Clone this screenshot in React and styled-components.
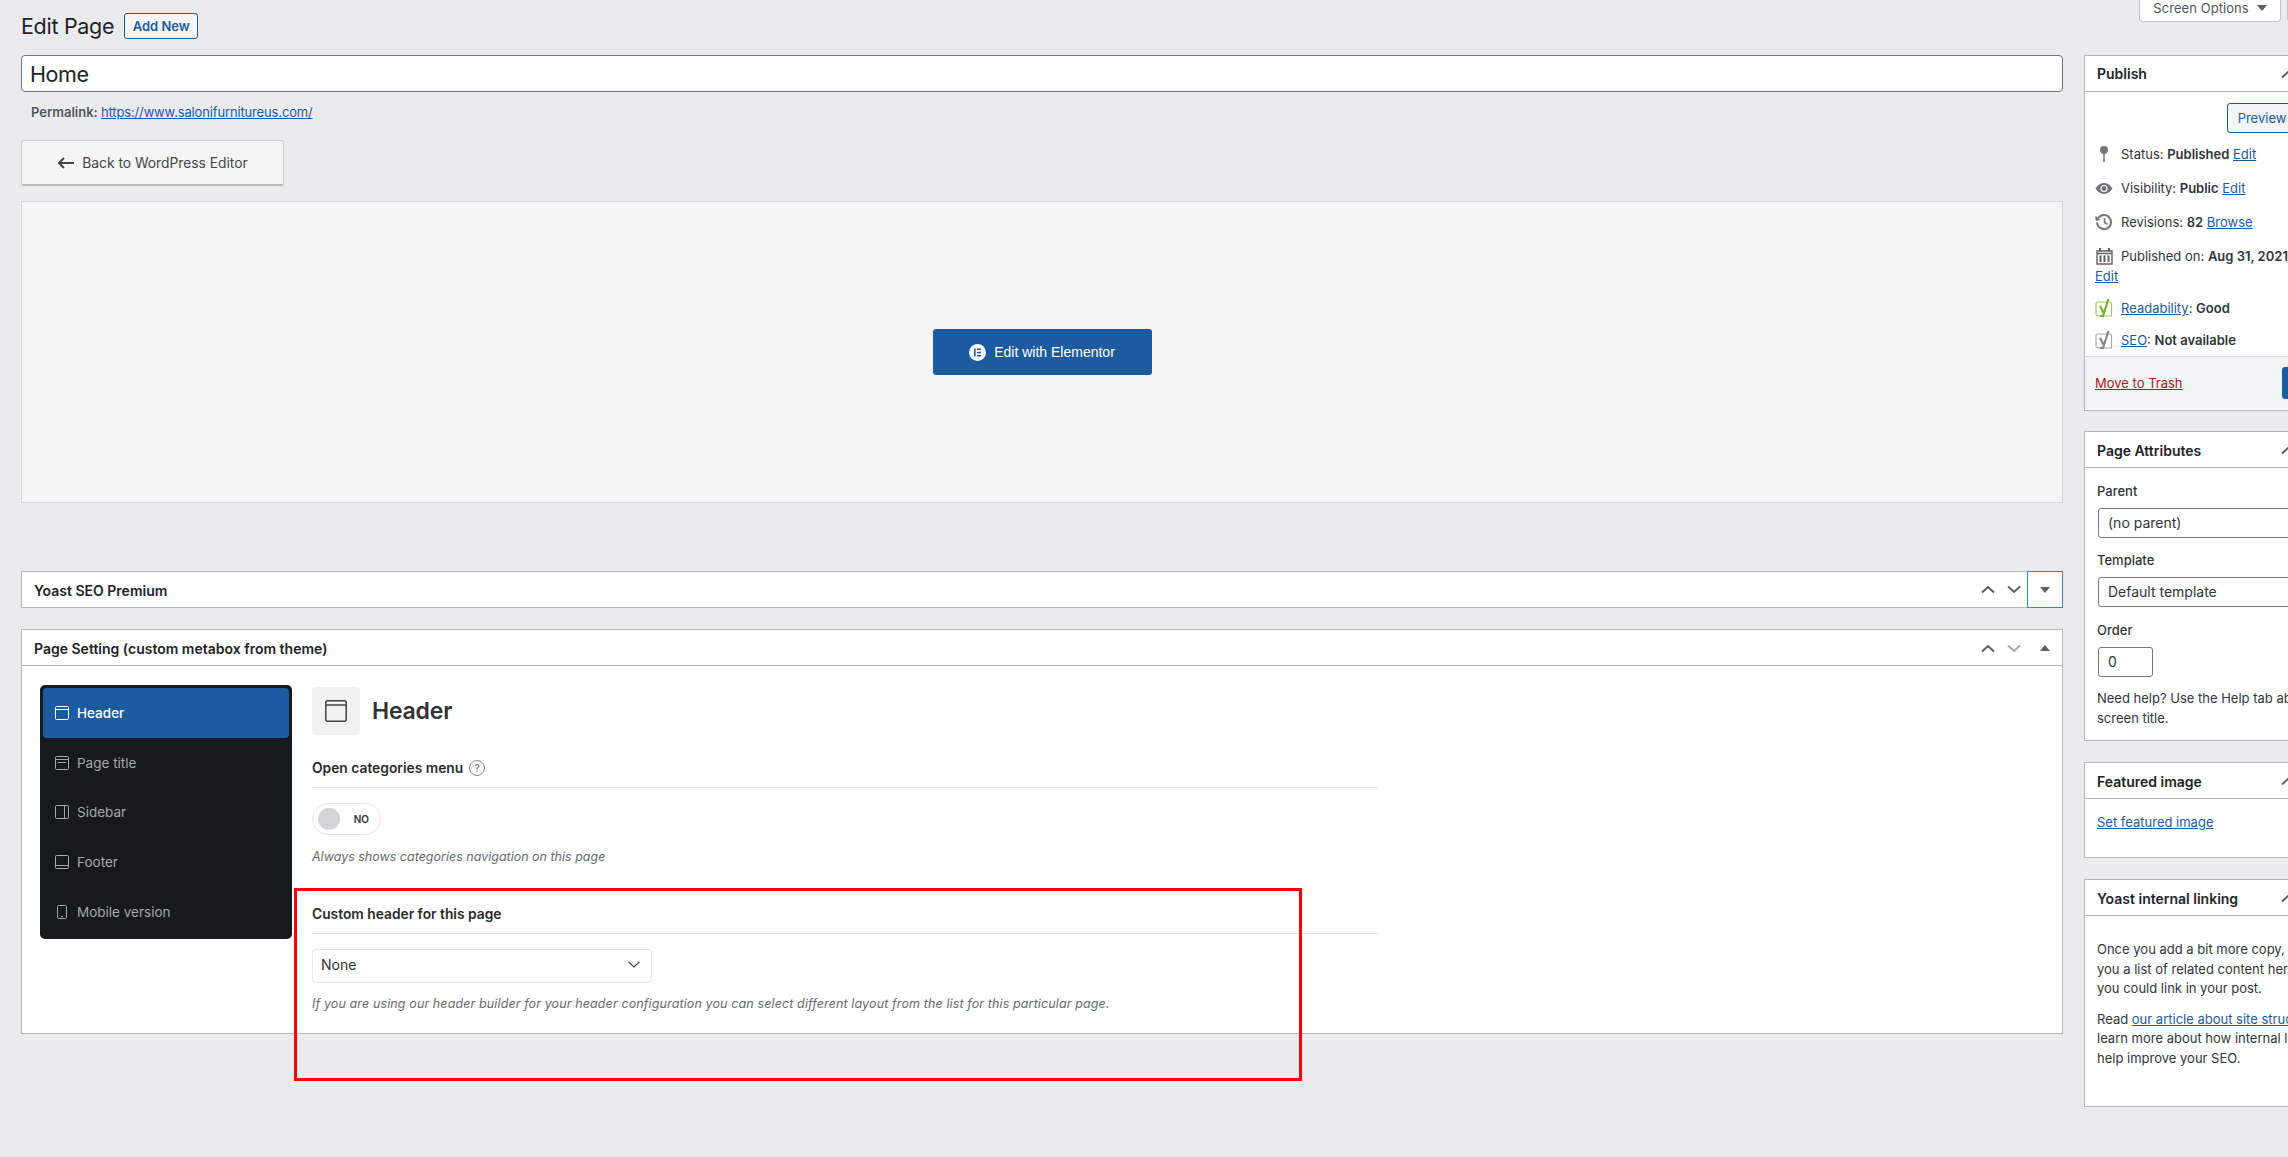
import styled, { createGlobalStyle } from "styled-components";

const Global = createGlobalStyle`
  html, body { margin: 0; padding: 0; background: #ebebed; }
  body { font-family: Inter, "Liberation Sans", sans-serif; font-size: 13px; color: #30353a; }
  * { box-sizing: border-box; }
`;

const Page = styled.div`
  width: 2288px;
  height: 1157px;
  overflow: hidden;
  padding-left: 21px;
`;

const TopRow = styled.div`
  display: flex;
  justify-content: space-between;
  align-items: flex-start;
  height: 55px;
`;

const TitleRow = styled.div`
  display: flex;
  align-items: center;
  gap: 10px;
  height: 40px;
  margin-top: 6px;
`;

const Heading = styled.h1`
  margin: 0;
  font-size: 21.5px;
  font-weight: 400;
  letter-spacing: -0.3px;
  color: #1d2327;
`;

const OutlineButton = styled.div`
  display: flex;
  align-items: center;
  justify-content: center;
  width: ${(p) => p.width}px;
  height: ${(p) => p.height}px;
  border: 1px solid #1c5ba0;
  border-radius: 3px;
  background: #f4f5f6;
  color: #1c5ba0;
  font-size: 13px;
  font-weight: ${(p) => p.weight || 400};
  flex-shrink: 0;
`;

const ScreenTabs = styled.div`
  display: flex;
  gap: 6px;
  width: 149px;
  flex-shrink: 0;
`;

const ScreenTab = styled.div`
  display: flex;
  align-items: center;
  justify-content: center;
  gap: 8px;
  width: 142px;
  height: 22px;
  flex-shrink: 0;
  background: #fff;
  border: 1px solid #c4c4c7;
  border-top: 0;
  border-radius: 0 0 4px 4px;
  color: #50575e;
  font-size: 13px;
  letter-spacing: 0.05px;
  padding-bottom: 6px;
`;

const Tri = styled.span`
  width: 0;
  height: 0;
  border-left: 5px solid transparent;
  border-right: 5px solid transparent;
  border-top: ${(p) => (p.$up ? "0" : "6px solid #5f6065")};
  border-bottom: ${(p) => (p.$up ? "6px solid #5f6065" : "0")};
`;

const Columns = styled.div`
  display: flex;
  gap: 21px;
  align-items: flex-start;
`;

const Main = styled.main`
  width: 2042px;
  flex-shrink: 0;
`;

const Side = styled.aside`
  width: 280px;
  flex-shrink: 0;
`;

const TitleInput = styled.div`
  height: 37px;
  background: #fff;
  border: 1px solid #727479;
  border-radius: 4px;
  padding: 0 8px;
  font-size: 21.5px;
  letter-spacing: -0.4px;
  line-height: 36px;
  color: #1d2327;
`;

const Permalink = styled.div`
  margin-top: 10px;
  padding-left: 10px;
  height: 20px;
  line-height: 20px;
  color: #50575e;
  font-weight: 600;
`;

const Link = styled.a`
  color: #1c5ba0;
  text-decoration: underline;
  font-weight: 400;
`;

const PermaLink = styled(Link)`
  letter-spacing: -0.15px;
`;

const BackButton = styled.div`
  display: flex;
  align-items: center;
  justify-content: center;
  gap: 8px;
  width: 263px;
  height: 46px;
  margin-top: 18px;
  background: #f5f5f5;
  border: 1px solid #ccc;
  border-bottom: 2px solid #bbb;
  border-radius: 3px;
  color: #454545;
  font-size: 13.8px;
`;

const ElementorPanel = styled.div`
  display: flex;
  align-items: center;
  justify-content: center;
  height: 302px;
  margin-top: 15px;
  background: #f5f5f5;
  border: 1px solid #d6d6d8;
`;

const ElementorButton = styled.div`
  display: flex;
  align-items: center;
  justify-content: center;
  gap: 8px;
  width: 219px;
  height: 46px;
  background: #1c5ba0;
  border-radius: 3px;
  color: #fff;
  font-family: "Liberation Sans", Arial, sans-serif;
  font-size: 14px;
`;

const Box = styled.section`
  background: #fff;
  border: 1px solid #b7b7ba;
  margin-top: ${(p) => p.$top || 0}px;
  height: ${(p) => p.height}px;
`;

const BoxHead = styled.div`
  display: flex;
  align-items: center;
  justify-content: space-between;
  height: ${(p) => (p.$flat ? 35 : 36)}px;
  padding-left: 12px;
  padding-top: ${(p) => (p.$flat ? 0 : 1)}px;
  border-bottom: ${(p) => (p.$flat ? "0" : "1px solid #b7b7ba")};
`;

const BoxTitle = styled.h2`
  margin: ${(p) => (p.$lowered ? 2 : 0)}px 0 ${(p) => (p.$raised ? 2 : 0)}px;
  font-size: 14px;
  font-weight: 600;
  color: #1d2327;
`;

const Handles = styled.div`
  display: flex;
  align-items: center;
  height: 100%;
  margin-right: -1px;
`;

const Handle = styled.div`
  display: flex;
  align-items: center;
  justify-content: center;
  width: 26px;
  height: 100%;
`;

const ToggleHandle = styled(Handle)`
  width: 36px;
  height: 37px;
  border: 1px solid ${(p) => (p.$focus ? "#3a80d2" : "transparent")};
`;

const SideHandle = styled.div`
  margin-right: 68px;
  display: flex;
`;

const Chevron = ({ down, color = "#5f6065" }) => (
  <svg width="14" height="9" viewBox="0 0 14 9">
    <polyline
      points={down ? "1,1.5 7,7 13,1.5" : "1,7.5 7,2 13,7.5"}
      fill="none"
      stroke={color}
      strokeWidth="2"
    />
  </svg>
);

const SettingsBody = styled.div`
  display: flex;
  padding: 19px 0 0 18px;
  gap: 20px;
`;

const Menu = styled.nav`
  width: 252px;
  height: 254px;
  padding: 3px;
  background: #171a1d;
  border-radius: 5px;
  flex-shrink: 0;
`;

const MenuItem = styled.div`
  display: flex;
  align-items: center;
  gap: 8px;
  height: 49.75px;
  padding-left: 12px;
  border-radius: 4px;
  background: ${(p) => (p.$active ? "#1c5ba0" : "transparent")};
  color: ${(p) => (p.$active ? "#fff" : "#a6a8aa")};
  font-size: 13.5px;
  font-weight: ${(p) => (p.$active ? 500 : 400)};
`;

const Options = styled.div`
  width: 1066px;
  padding-top: 2px;
`;

const OptionsHead = styled.div`
  display: flex;
  align-items: center;
  gap: 12px;
`;

const IconTile = styled.div`
  display: flex;
  align-items: center;
  justify-content: center;
  width: 48px;
  height: 48px;
  background: #f1f1f1;
  border-radius: 4px;
`;

const OptionsTitle = styled.h3`
  margin: 0;
  font-size: 23px;
  font-weight: 600;
  letter-spacing: -0.2px;
  color: #333;
`;

const Field = styled.div`
  position: relative;
  margin-top: ${(p) => p.$top}px;
`;

const FieldLabel = styled.div`
  display: flex;
  align-items: center;
  gap: 6px;
  height: ${(p) => p.height}px;
  padding-bottom: 10px;
  border-bottom: 1px solid #e6e6e6;
  font-size: 13.8px;
  font-weight: 600;
  color: #2b2b2b;
`;

const Hint = styled.span`
  display: inline-flex;
  align-items: center;
  justify-content: center;
  width: 16px;
  height: 16px;
  border: 1px solid #8a8a8a;
  border-radius: 50%;
  font-size: 10px;
  font-weight: 500;
  color: #777;
`;

const Switch = styled.div`
  display: flex;
  align-items: center;
  justify-content: space-between;
  width: 69px;
  height: 32px;
  margin-top: 15px;
  padding: 0 11px 0 5px;
  border: 1px solid #e6e6e6;
  border-radius: 16px;
  font-size: 10px;
  font-weight: 600;
  color: #333;
`;

const Knob = styled.span`
  width: 22px;
  height: 22px;
  border-radius: 50%;
  background: #d4d4d6;
`;

const Help = styled.p`
  margin: ${(p) => p.$top}px 0 0;
  height: 20px;
  line-height: 20px;
  font-size: 12.5px;
  font-style: italic;
  letter-spacing: ${(p) => p.$spacing || 0}px;
  color: #666a6e;
`;

const FakeSelect = styled.div`
  display: flex;
  align-items: center;
  justify-content: space-between;
  width: 340px;
  height: 34px;
  margin-top: 15px;
  padding: 0 11px 3px 8px;
  border: 1px solid #e6e6e6;
  border-radius: 4px;
  font-size: 14px;
  color: #333;
`;

// annotation drawn over the screenshot
const Highlight = styled.div`
  position: absolute;
  left: -18px;
  top: -17px;
  width: 1008px;
  height: 193px;
  border: 3px solid #f00;
  pointer-events: none;
`;

const Preview = styled(OutlineButton)`
  margin: 11px 0 0 142px;
`;

const Misc = styled.div`
  display: flex;
  align-items: center;
  gap: 8px;
  height: 20px;
  margin-top: ${(p) => p.$top}px;
  padding-left: 10px;
  white-space: nowrap;
`;

const Strong = styled.b`
  font-weight: 600;
`;

const IconSlot = styled.span`
  display: flex;
  justify-content: center;
  width: 18px;
  flex-shrink: 0;
`;

const EditLine = styled.div`
  padding-left: 10px;
  height: 20px;
  line-height: 20px;
`;

const PublishFoot = styled.div`
  display: flex;
  align-items: center;
  justify-content: space-between;
  height: 53px;
  margin-top: 6px;
  padding: 0 16px 0 10px;
  background: #f3f4f5;
  border-top: 1px solid #d8d8da;
`;

const TrashLink = styled.a`
  color: #a81c26;
  text-decoration: underline;
`;

const UpdateButton = styled.div`
  width: 65px;
  height: 32px;
  background: #1c5ba0;
  border-radius: 3px;
`;

const BoxBody = styled.div`
  padding: ${(p) => p.$pad};
`;

const SideLabel = styled.div`
  height: 20px;
  line-height: 20px;
  font-weight: 500;
  margin-top: ${(p) => p.$top || 0}px;
`;

const SideSelect = styled.div`
  width: 256px;
  height: 30px;
  margin: 7px 0 0 1px;
  padding-left: 9px;
  border: 1px solid #76787d;
  border-radius: 3px;
  font-size: 14px;
  line-height: 28px;
  color: #30353a;
`;

const OrderInput = styled(SideSelect)`
  width: 55px;
`;

const Para = styled.p`
  margin: ${(p) => p.$top || 0}px 0 0;
  line-height: 19.6px;
  white-space: ${(p) => (p.$nowrap ? "nowrap" : "normal")};
`;

const windowIcon = (color, bars) => (
  <svg width="14" height="14" viewBox="0 0 14 14" fill="none" stroke={color} strokeWidth="1">
    <rect x="0.5" y="0.5" width="13" height="13" rx="1" />
    {bars}
  </svg>
);

const menuItems = [
  { label: "Header", active: true, bars: <path d="M0.5 3.5h13" /> },
  { label: "Page title", bars: <path d="M0.5 3.5h13M3 6.5h8" /> },
  { label: "Sidebar", bars: <path d="M9.5 0.5v13" /> },
  { label: "Footer", bars: <path d="M0.5 10.5h13" /> },
];

const PinIcon = () => (
  <svg width="12" height="18" viewBox="0 0 12 18">
    <circle cx="6" cy="5" r="4" fill="#72757a" />
    <path d="M6 7v10" stroke="#72757a" strokeWidth="1.6" />
  </svg>
);

const EyeIcon = () => (
  <svg width="19" height="13" viewBox="0 0 19 13">
    <path d="M0.5 6.5C3 2.5 6 0.8 9.5 0.8s6.5 1.7 9 5.7c-2.5 4-5.5 5.7-9 5.7s-6.5-1.7-9-5.7z" fill="#72757a" />
    <circle cx="9.5" cy="6.5" r="3.8" fill="#fff" />
    <circle cx="9.5" cy="6.5" r="2.6" fill="#72757a" />
  </svg>
);

const HistoryIcon = () => (
  <svg width="18" height="18" viewBox="0 0 18 18" fill="none" stroke="#72757a" strokeWidth="2">
    <path d="M3.3 5A7 7 0 1 1 2 9.5" />
    <path d="M0.8 3.5 4.5 6.8 1.2 7.3z" fill="#72757a" strokeWidth="1" />
    <path d="M9.5 5v4.5l3 1.8" strokeWidth="1.6" />
  </svg>
);

const CalendarIcon = () => (
  <svg width="17" height="18" viewBox="0 0 17 18" fill="none" stroke="#5f6267">
    <path d="M1 4h15v13H1zM1 6.5h15" strokeWidth="1.4" />
    <path d="M4 1v3.5M13 1v3.5" strokeWidth="2" />
    <path d="M4.5 8.5V15M8.5 8.5V15M12.5 8.5V15" strokeWidth="2" />
  </svg>
);

const YoastIcon = ({ color, frame }) => (
  <svg width="18" height="20" viewBox="0 0 18 20" fill="none">
    <path d="M3 4h11.5a2 2 0 0 1 2 2v12H3a2 2 0 0 1-2-2V6a2 2 0 0 1 2-2z" stroke={frame} strokeWidth="1.2" />
    <path d="M5 8l3.5 6.5M13.5 1L8 18H5" stroke={color} strokeWidth="2.2" />
  </svg>
);

const ElementorLogo = () => (
  <svg width="17" height="17" viewBox="0 0 17 17">
    <circle cx="8.5" cy="8.5" r="8.5" fill="#fff" />
    <path d="M5 4.5h1.6v8H5zM8 4.5h4v1.6H8zM8 7.7h4v1.6H8zM8 10.9h4v1.6H8z" fill="#1c5ba0" />
  </svg>
);

export default function App() {
  return (
    <>
      <Global />
      <Page>
        <TopRow>
          <TitleRow>
            <Heading>Edit Page</Heading>
            <OutlineButton width={74} height={26} weight={600}>Add New</OutlineButton>
          </TitleRow>
          <ScreenTabs>
            <ScreenTab>
              Screen Options <Tri />
            </ScreenTab>
            <ScreenTab />
          </ScreenTabs>
        </TopRow>
        <Columns>
          <Main>
            <TitleInput>Home</TitleInput>
            <Permalink>
              Permalink: <PermaLink>https://www.salonifurnitureus.com/</PermaLink>
            </Permalink>
            <BackButton>
              <svg width="17" height="12" viewBox="0 0 17 12" fill="none" stroke="#454545" strokeWidth="2">
                <path d="M17 6H2M7 1 2 6l5 5" />
              </svg>
              Back to WordPress Editor
            </BackButton>
            <ElementorPanel>
              <ElementorButton>
                <ElementorLogo />
                Edit with Elementor
              </ElementorButton>
            </ElementorPanel>

            <Box $top={68} height={37}>
              <BoxHead $flat>
                <BoxTitle $lowered>Yoast SEO Premium</BoxTitle>
                <Handles>
                  <Handle><Chevron /></Handle>
                  <Handle><Chevron down /></Handle>
                  <ToggleHandle $focus><Tri /></ToggleHandle>
                </Handles>
              </BoxHead>
            </Box>

            <Box $top={21} height={405}>
              <BoxHead>
                <BoxTitle>Page Setting (custom metabox from theme)</BoxTitle>
                <Handles>
                  <Handle><Chevron /></Handle>
                  <Handle><Chevron down color="#a5a6a8" /></Handle>
                  <ToggleHandle><Tri $up /></ToggleHandle>
                </Handles>
              </BoxHead>
              <SettingsBody>
                <Menu>
                  {menuItems.map((item) => (
                    <MenuItem key={item.label} $active={item.active}>
                      {windowIcon(item.active ? "#fff" : "#a6a8aa", item.bars)}
                      {item.label}
                    </MenuItem>
                  ))}
                  <MenuItem>
                    <svg width="14" height="14" viewBox="0 0 14 14" fill="none" stroke="#a6a8aa">
                      <rect x="2.5" y="0.5" width="9" height="13" rx="1" />
                      <path d="M6 11.5h2" />
                    </svg>
                    Mobile version
                  </MenuItem>
                </Menu>
                <Options>
                  <OptionsHead>
                    <IconTile>
                      <svg width="22" height="22" viewBox="0 0 22 22" fill="none" stroke="#444" strokeWidth="1.5">
                        <rect x="0.8" y="0.8" width="20.4" height="20.4" rx="2" />
                        <path d="M0.8 5h20.4" />
                      </svg>
                    </IconTile>
                    <OptionsTitle>Header</OptionsTitle>
                  </OptionsHead>
                  <Field $top={23}>
                    <FieldLabel height={30}>
                      Open categories menu <Hint>?</Hint>
                    </FieldLabel>
                    <Switch>
                      <Knob />
                      NO
                    </Switch>
                    <Help $top={12}>Always shows categories navigation on this page</Help>
                  </Field>
                  <Field $top={38}>
                    <Highlight />
                    <FieldLabel height={29}>Custom header for this page</FieldLabel>
                    <FakeSelect>
                      None
                      <svg width="12" height="7" viewBox="0 0 12 7" fill="none" stroke="#444" strokeWidth="1.2">
                        <path d="M0.5 0.8 6 6l5.5-5.2" />
                      </svg>
                    </FakeSelect>
                    <Help $top={11} $spacing={0.12}>
                      If you are using our header builder for your header configuration you can select different layout from the list for this particular page.
                    </Help>
                  </Field>
                </Options>
              </SettingsBody>
            </Box>
          </Main>

          <Side>
            <Box height={356}>
              <BoxHead>
                <BoxTitle $raised>Publish</BoxTitle>
                <SideHandle><Chevron /></SideHandle>
              </BoxHead>
              <Preview width={70} height={30}>Preview</Preview>
              <Misc $top={11}>
                <IconSlot><PinIcon /></IconSlot>
                <span>Status: <Strong>Published</Strong> <Link>Edit</Link></span>
              </Misc>
              <Misc $top={14}>
                <IconSlot><EyeIcon /></IconSlot>
                <span>Visibility: <Strong>Public</Strong> <Link>Edit</Link></span>
              </Misc>
              <Misc $top={14}>
                <IconSlot><HistoryIcon /></IconSlot>
                <span>Revisions: <Strong>82</Strong> <Link>Browse</Link></span>
              </Misc>
              <Misc $top={14}>
                <IconSlot><CalendarIcon /></IconSlot>
                <span>Published on: <Strong>Aug 31, 2021</Strong></span>
              </Misc>
              <EditLine><Link>Edit</Link></EditLine>
              <Misc $top={12}>
                <IconSlot><YoastIcon color="#77b227" frame="#9ad05a" /></IconSlot>
                <span><Link>Readability</Link>: <Strong>Good</Strong></span>
              </Misc>
              <Misc $top={12}>
                <IconSlot><YoastIcon color="#888" frame="#aaa" /></IconSlot>
                <span><Link>SEO</Link>: <Strong>Not available</Strong></span>
              </Misc>
              <PublishFoot>
                <TrashLink>Move to Trash</TrashLink>
                <UpdateButton />
              </PublishFoot>
            </Box>

            <Box $top={20} height={310}>
              <BoxHead>
                <BoxTitle>Page Attributes</BoxTitle>
                <SideHandle><Chevron /></SideHandle>
              </BoxHead>
              <BoxBody $pad="13px 12px">
                <SideLabel>Parent</SideLabel>
                <SideSelect>(no parent)</SideSelect>
                <SideLabel $top={12}>Template</SideLabel>
                <SideSelect>Default template</SideSelect>
                <SideLabel $top={13}>Order</SideLabel>
                <OrderInput>0</OrderInput>
                <Para $top={12}>Need help? Use the Help tab above the screen title.</Para>
              </BoxBody>
            </Box>

            <Box $top={21} height={96}>
              <BoxHead>
                <BoxTitle>Featured image</BoxTitle>
                <SideHandle><Chevron /></SideHandle>
              </BoxHead>
              <BoxBody $pad="15px 12px">
                <Link>Set featured image</Link>
              </BoxBody>
            </Box>

            <Box $top={21} height={228}>
              <BoxHead>
                <BoxTitle>Yoast internal linking</BoxTitle>
                <SideHandle><Chevron /></SideHandle>
              </BoxHead>
              <BoxBody $pad="24px 12px">
                <Para $nowrap>
                  Once you add a bit more copy, we'll give
                  <br />
                  you a list of related content here to which
                  <br />
                  you could link in your post.
                </Para>
                <Para $top={11}>
                  Read <Link>our article about site structure</Link> to learn more about how internal linking can help improve your SEO.
                </Para>
              </BoxBody>
            </Box>
          </Side>
        </Columns>
      </Page>
    </>
  );
}
